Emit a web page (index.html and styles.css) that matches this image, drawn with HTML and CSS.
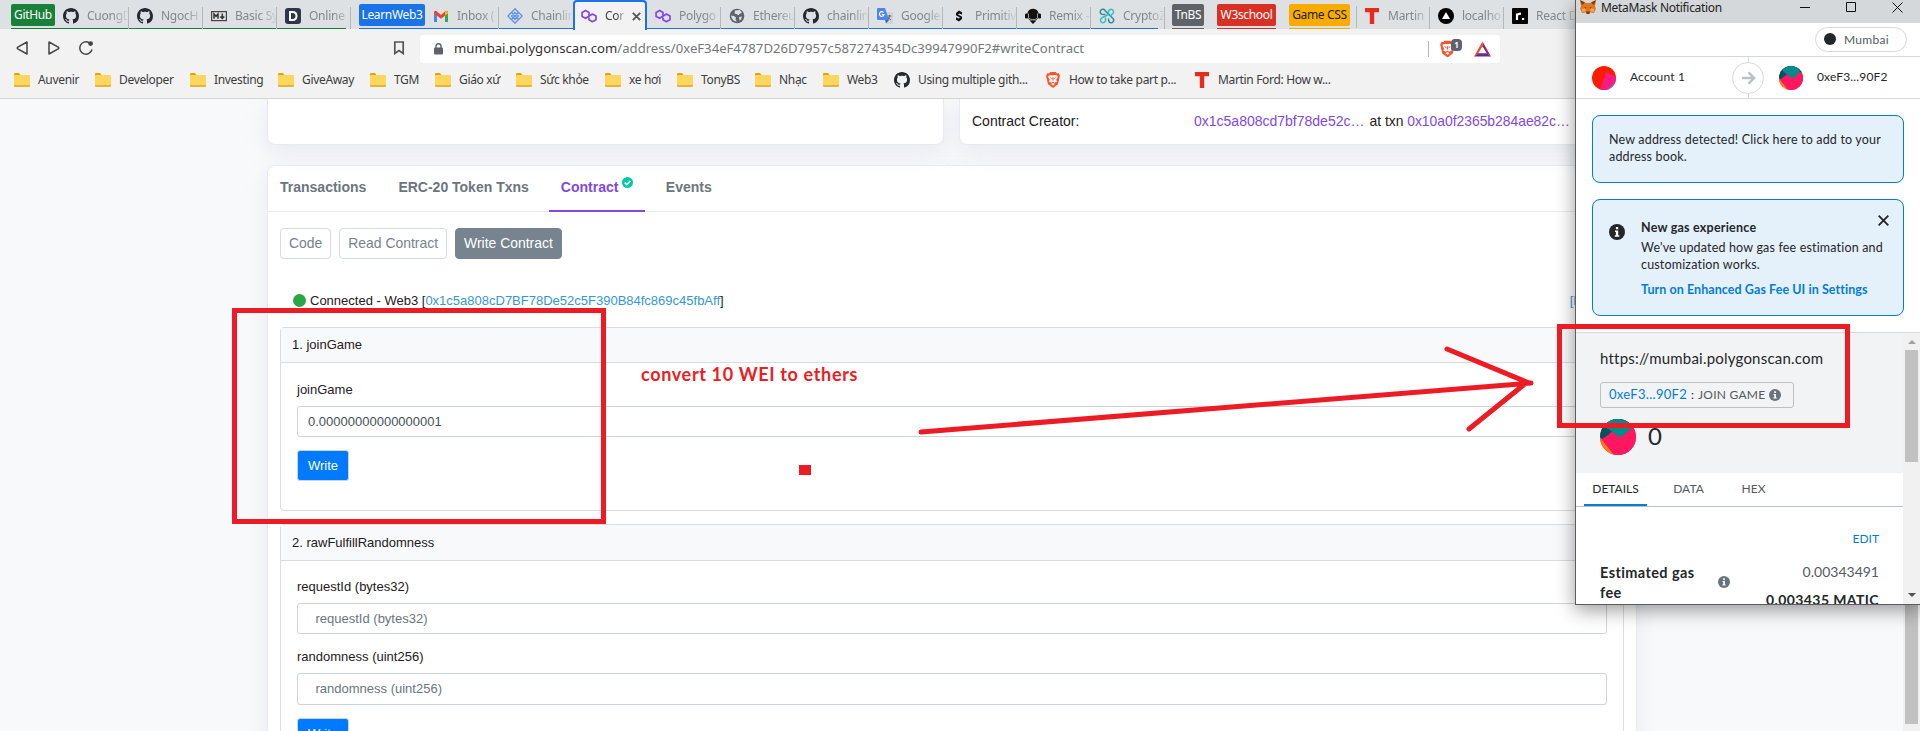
FILE: index.html
```html
<!DOCTYPE html>
<html lang="en">
<head>
<meta charset="utf-8">
<title>Contract Address</title>
<link rel="stylesheet" href="styles.css">
</head>
<body>
<svg class="defs" width="0" height="0">
  <defs>
    <symbol id="github" viewBox="0 0 16 16"><path fill="#24292f" d="M8 0C3.58 0 0 3.58 0 8c0 3.54 2.29 6.53 5.47 7.59.4.07.55-.17.55-.38 0-.19-.01-.82-.01-1.49-2.01.37-2.53-.49-2.69-.94-.09-.23-.48-.94-.82-1.13-.28-.15-.68-.52-.01-.53.63-.01 1.08.58 1.23.82.72 1.21 1.87.87 2.33.66.07-.52.28-.87.51-1.07-1.78-.2-3.64-.89-3.64-3.95 0-.87.31-1.59.82-2.15-.08-.2-.36-1.02.08-2.12 0 0 .67-.21 2.2.82.64-.18 1.32-.27 2-.27s1.36.09 2 .27c1.53-1.04 2.2-.82 2.2-.82.44 1.1.16 1.92.08 2.12.51.56.82 1.27.82 2.15 0 3.07-1.87 3.75-3.65 3.95.29.25.54.73.54 1.48 0 1.07-.01 1.93-.01 2.2 0 .21.15.46.55.38A8.01 8.01 0 0 0 16 8c0-4.42-3.58-8-8-8z"/></symbol>
    <symbol id="polygon" viewBox="0 0 16 16"><g fill="none" stroke="#8247e5" stroke-width="1.7" stroke-linejoin="round"><path d="M8 8.2V4.4L4.6 2.4 1.1 4.4v4L4.6 10.300 11.400 6 15 8v3.700L11.400 13.700 8 11.700V9.500"/></g></symbol>
    <symbol id="folder" viewBox="0 0 16 14"><path fill="#dfa313" d="M0 1.200Q0 0 1.200 0H5l1.500 2H15v3H0z"/><rect x="0" y="2" width="16" height="11.500" rx="1" fill="#ffd65c"/><path fill="#d9a62e" d="M0 12.300h16v.4q0 1-1 1H1q-1 0-1-1z"/></symbol>
    <symbol id="tee" viewBox="0 0 16 16"><path fill="#e62b1e" d="M1 0h14v4.200h-4.800V16H5.800V4.200H1z"/></symbol>
    <symbol id="brave" viewBox="0 0 16 18"><path fill="#fb542b" d="M5 0h6l1.500 1.600 2-.2 1.300 3.200-.6 2.200-1.600 7L8 18l-5.600-4.200-1.600-7-.6-2.200L1.500 1.400l2 .2z"/><path fill="#fff" d="M8 4l2.200-.7 2.800.8.300 1.800-1.700 2.700 1 2L9.800 12 8 10.700 6.200 12l-2.800-1.400 1-2L2.700 5.900 3 4.100l2.800-.8zM8 12.200l2.200 1.200L8 15.200l-2.200-1.800z"/><path fill="#fb542b" d="M4.200 6l2.700.7-.6 1.100zM11.800 6l-2.700.7.6 1.100zM7.300 6h1.400v3.600H7.300z"/></symbol>
    <symbol id="info" viewBox="0 0 16 16"><circle cx="8" cy="8" r="8" fill="currentColor"/><path fill="#fff" d="M6.900 3h2.300v2.200H6.900zM6 6.600h3.200v4.600h1.100v1.500H5.800v-1.500h1.100V8.100H6z"/></symbol>
    <symbol id="jazz" viewBox="0 0 36 36"><clipPath id="disc"><circle cx="18" cy="18" r="18"/></clipPath><g clip-path="url(#disc)"><path fill="#ff1861" d="M0 0h36v36H0z"/><path fill="#035262" d="M0 0h36v9l-2 0H0zM0 0h14v13L0 21z"/><path fill="#028a8d" d="M5 0h26v10L20 19 6 8z"/><path fill="#ff7a0d" d="M0 18l14 18H0z"/><path fill="#ff1861" d="M2 21L12 12.500l8 6.500L33 9h3v27H14z"/></g></symbol>
  </defs>
</svg>

<div class="browser">
  <div class="tabstrip">
    <div class="group green"><span class="chip">GitHub</span>
      <div class="tab"><svg class="fav"><use href="#github"/></svg><span>CuongD</span></div>
      <div class="tab"><svg class="fav"><use href="#github"/></svg><span>NgocH</span></div>
      <div class="tab"><svg class="fav" viewBox="0 0 16 16"><rect x=".6" y="3.600" width="14.800" height="9" fill="none" stroke="#444" stroke-width="1.200"/><path fill="none" stroke="#333" stroke-width="1.500" d="M3 10.800V6l2 2.300L7 6v4.800M11.300 5.500v4.500M9.300 8.500l2 2 2-2"/></svg><span>Basic Sy</span></div>
      <div class="tab"><svg class="fav" viewBox="0 0 16 16"><rect width="16" height="16" rx="3" fill="#2d3748"/><path fill="none" stroke="#fff" stroke-width="2" d="M5 4h2.500q4 0 4 4t-4 4H5z"/></svg><span>Online</span></div>
    </div>
    <div class="group blue"><span class="chip">LearnWeb3</span>
      <div class="tab"><svg class="fav" viewBox="0 0 16 16"><path fill="#4285f4" d="M1 4l3 2v8H1z"/><path fill="#34a853" d="M12 6l3-2v10h-3z"/><path fill="#ea4335" d="M1 4q1-2 3-.5L8 7l4-3.500Q14 2 15 4v1.500l-7 5.200-7-5.200z"/><path fill="#fbbc04" d="M12 3.500Q14.500 2 15 4.200V5.500l-3 2.300z"/></svg><span>Inbox (</span></div>
      <div class="tab"><svg class="fav" viewBox="0 0 16 16"><g fill="none" stroke="#5b8def" stroke-width="1.300"><path d="M8 .8L15.200 8 8 15.200.8 8zM4.500 4.500l7 7M11.500 4.500l-7 7M8 4.500L11.500 8 8 11.500 4.500 8z"/></g></svg><span>Chainlin</span></div>
      <div class="tab active"><svg class="fav"><use href="#polygon"/></svg><span>Cor</span><svg class="close" viewBox="0 0 9 9"><path fill="none" stroke="#555" stroke-width="1.800" d="M.8.800l7.400 7.400M8.200.8L.8 8.200"/></svg></div>
      <div class="tab"><svg class="fav"><use href="#polygon"/></svg><span>Polygo</span></div>
      <div class="tab"><svg class="fav" viewBox="0 0 16 16"><circle cx="8" cy="8" r="7.300" fill="#5f6368"/><path fill="#dee1e3" d="M2 7.500l3 .5 2 1.500-.5 2L8 13.500q-5 0-6-6zM6 2.500l5-.5 2 3-2 .5-1.500 1.800L7.500 6l-2-.5z"/><path fill="#dee1e3" d="M10 9l3-.5-1 3-1.500 1z"/></svg><span>Ethereu</span></div>
      <div class="tab"><svg class="fav"><use href="#github"/></svg><span>chainlin</span></div>
      <div class="tab"><svg class="fav" viewBox="0 0 16 16"><path fill="#cfd3d8" d="M7 4h8q1 0 1 1v10q0 1-1 1h-5z"/><path fill="#4a86ee" d="M1 0h7l4 12H1q-1 0-1-1V1q0-1 1-1z"/><path fill="#3367c5" d="M8 12h4l-3 3.500z"/><path fill="none" stroke="#fff" stroke-width="1.200" d="M6.500 4.500A2.300 2.300 0 1 0 7 6.500H4.800"/><path fill="none" stroke="#667" d="M10.500 8h4M12.500 7v1q0 2-2 4M11 9.500l3 2.500"/></svg><span>Google</span></div>
      <div class="tab"><svg class="fav" viewBox="0 0 16 16"><path fill="#111" d="M5 5l3-2.500 3 1.700v2.600L8.500 5.400 5 7.500zM11 11l-3 2.500-3-1.700V9.200l2.500 1.400L11 8.500z"/><path stroke="#111" stroke-width="2" d="M5.500 6.500l5 3"/></svg><span>Primitiv</span></div>
      <div class="tab"><svg class="fav" viewBox="0 0 16 16"><path fill="#111" d="M8 0.800a6 6 0 0 1 5 9.200q-1 2.500-5 2.500T3 10A6 6 0 0 1 8 .8z"/><rect x="0" y="5.500" width="3" height="5" rx="1.300" fill="#111"/><rect x="13" y="5.500" width="3" height="5" rx="1.300" fill="#111"/><path fill="none" stroke="#dee1e3" stroke-width=".7" d="M3.500 5.500v4.200q1 2 4.500 2t4.500-2V5.500"/><path fill="#111" d="M4.500 12.500L8 16l3.500-3.500z"/></svg><span>Remix -</span></div>
      <div class="tab"><svg class="fav" viewBox="0 0 16 16"><g fill="none" stroke-width="1.500"><path stroke="#2a8d9c" d="M6.500 6.500L2.700 6.200A2.600 2.600 0 1 1 6.200 2.700L13.300 9.800A2.600 2.600 0 1 1 9.800 13.300L9.500 10.500"/><path stroke="#38bcc8" d="M9.500 6.500V3A2.600 2.600 0 1 1 13 6.300L11 8.500M6.500 9.500V13A2.600 2.600 0 1 1 3 9.700L9.500 6.500"/></g></svg><span>CryptoZ</span></div>
    </div>
    <div class="group grey"><span class="chip">TnBS</span></div>
    <div class="group red"><span class="chip">W3school</span></div>
    <div class="group amber"><span class="chip">Game CSS</span></div>
    <div class="group plain">
      <div class="tab"><svg class="fav"><use href="#tee"/></svg><span>Martin</span></div>
      <div class="tab"><svg class="fav" viewBox="0 0 16 16"><circle cx="8" cy="8" r="8" fill="#000"/><path fill="#fff" d="M8 4l4 7H4z"/></svg><span>localho</span></div>
      <div class="tab"><svg class="fav" viewBox="0 0 16 16"><rect width="16" height="16" rx="1" fill="#000"/><path fill="none" stroke="#fff" stroke-width="2.200" d="M5 12V5.500M5 8q0-2.400 4-2.400"/><path fill="#fff" d="M10 10h2.200v2H10z"/></svg><span>React D</span></div>
    </div>
  </div>

  <div class="toolbar">
    <svg class="nav" viewBox="0 0 16 16"><path fill="none" stroke="#444" stroke-width="1.500" stroke-linejoin="round" d="M13 2v12L3.800 8.800q-1.200-.8 0-1.600z"/></svg>
    <svg class="nav" viewBox="0 0 16 16"><path fill="none" stroke="#444" stroke-width="1.500" stroke-linejoin="round" d="M3 2v12l9.200-5.200q1.200-.8 0-1.600z"/></svg>
    <svg class="nav" viewBox="0 0 16 16"><path fill="none" stroke="#444" stroke-width="1.500" d="M14 9.500A6.200 6.200 0 1 1 11 2.600"/><circle cx="12.600" cy="3.600" r="2.400" fill="#444"/></svg>
    <svg class="bookmark" viewBox="0 0 12 14"><path fill="none" stroke="#555" stroke-width="1.700" d="M1.800 1h8.400v11.500L6 9.500l-4.200 3z"/></svg>
    <div class="omnibox">
      <svg class="lock" viewBox="0 0 9 12"><rect y="4.500" width="9" height="7" rx="1" fill="#5f6368"/><path fill="none" stroke="#5f6368" stroke-width="1.400" d="M2 5V3a2.500 2.300 0 0 1 5 0v2"/></svg>
      <span class="url">mumbai.polygonscan.com<i>/address/0xeF34eF4787D26D7957c587274354Dc39947990F2#writeContract</i></span>
      <span class="divider"></span>
      <span class="shield"><svg viewBox="0 0 16 18"><use href="#brave"/></svg><b>1</b></span>
      <svg class="bat" viewBox="0 0 18 16"><path fill="#ff4724" d="M9 0v5L4.500 12.500 0 16z"/><path fill="#9e1f63" d="M9 0l9 16-4.500-3.500L9 5z"/><path fill="#662d91" d="M0 16l4.500-3.500h9L18 16z"/></svg>
    </div>
  </div>

  <div class="bookmarks">
    <span class="bm w81"><svg class="dir"><use href="#folder"/></svg>Auvenir</span>
    <span class="bm w95"><svg class="dir"><use href="#folder"/></svg>Developer</span>
    <span class="bm w88"><svg class="dir"><use href="#folder"/></svg>Investing</span>
    <span class="bm w92"><svg class="dir"><use href="#folder"/></svg>GiveAway</span>
    <span class="bm w65"><svg class="dir"><use href="#folder"/></svg>TGM</span>
    <span class="bm w81b"><svg class="dir"><use href="#folder"/></svg>Giáo xứ</span>
    <span class="bm w89"><svg class="dir"><use href="#folder"/></svg>Sức khỏe</span>
    <span class="bm w72"><svg class="dir"><use href="#folder"/></svg>xe hơi</span>
    <span class="bm w78"><svg class="dir"><use href="#folder"/></svg>TonyBS</span>
    <span class="bm w68"><svg class="dir"><use href="#folder"/></svg>Nhạc</span>
    <span class="bm w71"><svg class="dir"><use href="#folder"/></svg>Web3</span>
    <span class="bm w151"><svg class="site"><use href="#github"/></svg>Using multiple gith...</span>
    <span class="bm w149"><svg class="site"><use href="#brave"/></svg>How to take part p...</span>
    <span class="bm"><svg class="site"><use href="#tee"/></svg>Martin Ford: How w...</span>
  </div>

  <div class="viewport">
    <main class="page">
      <div class="summary">
        <section class="panel overview"></section>
        <section class="panel more"><span class="k">Contract Creator:</span><a>0x1c5a808cd7bf78de52c…</a><span class="txn">at txn <a>0x10a0f2365b284ae82c…</a></span></section>
      </div>
      <section class="panel contract">
        <nav class="sections">
          <span class="sec">Transactions</span>
          <span class="sec">ERC-20 Token Txns</span>
          <span class="sec on">Contract<svg class="check" viewBox="0 0 11 11"><circle cx="5.500" cy="5.500" r="5.500" fill="#00c9a7"/><path fill="none" stroke="#fff" stroke-width="1.500" d="M2.700 5.600l2 2 3.700-3.700"/></svg></span>
          <span class="sec">Events</span>
        </nav>
        <div class="modes"><span class="mode">Code</span><span class="mode">Read Contract</span><span class="mode sel">Write Contract</span></div>
        <div class="status"><i class="dot"></i><span>Connected - Web3 [<a>0x1c5a808cD7BF78De52c5F390B84fc869c45fbAff</a>]</span><span class="expand">[<a>Expand all</a>]</span></div>
        <article class="fn first">
          <header>1. joinGame</header>
          <div class="form">
            <label>joinGame</label>
            <div class="field value">0.00000000000000001</div>
            <span class="write">Write</span>
          </div>
        </article>
        <article class="fn second">
          <header>2. rawFulfillRandomness</header>
          <div class="form">
            <label>requestId (bytes32)</label>
            <div class="field">requestId (bytes32)</div>
            <label>randomness (uint256)</label>
            <div class="field tall">randomness (uint256)</div>
            <span class="write">Write</span>
          </div>
        </article>
      </section>
    </main>
    <div class="scroll"><div class="thumb"></div></div>
  </div>
</div>

<aside class="wallet">
  <div class="titlebar">
    <svg class="fox" viewBox="0 0 16 14"><path fill="#e2761b" d="M0 0l6 3h4l6-3-1 6 .8 3-1.800 4-4-.8L8 14l-2-1.800L2 13 .2 9 1 6z"/><path fill="#763d16" d="M0 0l5 2.500L2 5zM16 0l-5 2.500L14 5zM6 11.500h4L9.500 14h-3z"/><path fill="#f6a45c" d="M2 9l3-1 1 3-4 1zM14 9l-3-1-1 3 4 1z"/><path fill="#233447" d="M4.500 7l2 1-1.500.6zM11.500 7l-2 1 1.500.6z"/></svg>
    <span class="wtitle">MetaMask Notification</span>
    <svg class="ctl" viewBox="0 0 104 12"><path fill="none" stroke="#111" d="M0 6.500h10M46.500 1.500h9v9h-9zM92.500 1.500l10 10M102.500 1.500l-10 10"/></svg>
  </div>
  <div class="network"><span class="pill"><i></i>Mumbai</span></div>
  <div class="parties">
    <svg class="av" viewBox="0 0 24 24"><clipPath id="d2"><circle cx="12" cy="12" r="12"/></clipPath><g clip-path="url(#d2)"><path fill="#fc1c04" d="M0 0h24v24H0z"/><path fill="#ff1880" d="M14 6l10 5v13H8z"/><path fill="#1aa6f2" d="M24 16v8h-9z"/></g></svg>
    <span class="from">Account 1</span>
    <span class="hop"><svg viewBox="0 0 16 14"><path fill="none" stroke="#bbc0c5" stroke-width="2.600" d="M1 7h12.500M8 1l6 6-6 6"/></svg></span>
    <svg class="av"><use href="#jazz"/></svg>
    <span class="to">0xeF3...90F2</span>
  </div>
  <div class="notices">
    <div class="notice addr">New address detected! Click here to add to your<br>address book.</div>
    <div class="notice gas">
      <svg class="inf"><use href="#info"/></svg>
      <div class="msg"><b>New gas experience</b><p>We've updated how gas fee estimation and<br>customization works.</p><a>Turn on Enhanced Gas Fee UI in Settings</a></div>
      <svg class="x" viewBox="0 0 11 11"><path fill="none" stroke="#24272a" stroke-width="1.900" d="M.7.700l9.600 9.600M10.300.7L.7 10.300"/></svg>
    </div>
  </div>
  <div class="detail">
    <div class="body">
      <div class="origin">
        <div class="host">https://mumbai.polygonscan.com</div>
        <div class="tag"><a>0xeF3...90F2</a><span class="colon">:</span><span class="act">JOIN GAME</span><svg class="mini"><use href="#info"/></svg></div>
        <div class="amount"><svg class="big"><use href="#jazz"/></svg><span>0</span></div>
      </div>
      <div class="wtabs"><span class="cur">DETAILS</span><span>DATA</span><span class="hex">HEX</span></div>
      <div class="edit">EDIT</div>
      <div class="fee">
        <div class="feename">Estimated gas<br>fee</div>
        <svg class="mini"><use href="#info"/></svg>
        <div class="sums"><span>0.00343491</span><b>0.003435 MATIC</b></div>
      </div>
    </div>
    <div class="wscroll"><i class="up"></i><div class="wthumb"></div><i class="down"></i></div>
  </div>
</aside>

<div class="mark box-form"></div>
<div class="mark box-wallet"></div>
<div class="mark-dot"></div>
<div class="mark-note">convert 10 WEI to ethers</div>
<svg class="mark-arrow" viewBox="0 0 630 100"><path fill="none" stroke="#ed1c24" stroke-width="5" stroke-linecap="round" d="M11 92L621 43M537 9L619 43M616 43L559 89"/></svg>
</body>
</html>
```
FILE: styles.css
```css
* { box-sizing: border-box; }
body { margin: 0; width: 1920px; height: 731px; overflow: hidden; position: relative; font-family: "Liberation Sans", Arial, sans-serif; color: #1e2022; background: #f8f9fb; }
a { text-decoration: none; }
svg { display: block; flex: none; }
.defs { position: absolute; }
.browser { display: flex; flex-direction: column; height: 731px; }

/* Tab strip */
.tabstrip { display: flex; height: 29px; flex: none; background: #dee1e3; padding-left: 11px; font: 12px/24px "Noto Sans", "Open Sans", sans-serif; }
.group { display: flex; height: 29px; align-items: stretch; border-bottom: 1px solid; flex: none; }
.chip { height: 22px; margin-top: 4px; border-radius: 2px; color: #fff; line-height: 21px; text-align: center; flex: none; letter-spacing: -.35px; white-space: nowrap; }
.green { color: #188038; width: 335px; }
.green .chip { background: #188038; width: 44px; }
.blue { color: #1a73e8; width: 799px; margin-left: 13px; }
.blue .chip { background: #1a73e8; width: 66px; }
.grey { color: #5f6368; margin-left: 14px; }
.grey .chip { background: #5f6368; width: 32px; }
.red { color: #d93025; margin-left: 13px; }
.red .chip { background: #d93025; width: 59px; }
.amber { color: #f9ab00; margin-left: 13px; }
.amber .chip { background: #f9ab00; color: #222; width: 61px; }
.plain { border-color: transparent; margin-left: 6px; }
.plain .tab:first-child { border-left: 1px solid transparent; border-image: linear-gradient(transparent 7px, #b4b7ba 7px) 1; padding-left: 7px; }
.tab { width: 74px; flex: none; display: flex; align-items: center; gap: 8px; padding: 3px 0 0 8px; color: #84878a; position: relative; letter-spacing: -.25px; }
.tab::after { content: ""; width: 1px; height: 22px; background: #b4b7ba; position: absolute; right: 0; top: 7px; }
.tab span { width: 41px; overflow: hidden; white-space: nowrap; -webkit-mask-image: linear-gradient(90deg, #000 60%, transparent 105%); mask-image: linear-gradient(90deg, #000 60%, transparent 105%); }
.fav { width: 16px; height: 16px; }
.tab.active { background: #f2f2f2; border: 2px solid #1a73e8; border-bottom: 0; border-radius: 4px 4px 0 0; height: 30px; padding: 0 0 0 6px; color: #444; }
.tab.active span { width: 20px; }
.tab.active .close { margin-left: -1px; }
.tab.active::after, .tab:has(+ .active)::after { display: none; }
.close { width: 9px; height: 9px; }

/* Toolbar */
.toolbar { height: 37px; flex: none; background: #f2f2f2; display: flex; align-items: center; padding: 1px 0 0 14px; gap: 16px; }
.nav { width: 16px; height: 16px; }
.bookmark { width: 12px; height: 14px; margin: 0 -1px 0 283px; }
.omnibox { width: 1080px; height: 28px; margin-top: 1px; background: #fff; border-radius: 4px; display: flex; align-items: center; padding-left: 14px; font: 13.130px/28px "Noto Sans", "Open Sans", sans-serif; color: #333; }
.lock { width: 9px; height: 12px; }
.url { margin-left: 11px; width: 974px; white-space: nowrap; padding-bottom: 1px; }
.url i { font-style: normal; color: #74777a; }
.divider { width: 1px; height: 16px; background: #b4b7ba; margin-right: 11px; }
.shield { position: relative; width: 34px; }
.shield svg { width: 15px; height: 18px; }
.shield b { position: absolute; left: 11px; top: -1px; width: 11px; height: 12px; border-radius: 4px; background: #5d6270; color: #fff; font: bold 8px/12px "Noto Sans", sans-serif; text-align: center; }
.bat { width: 17px; height: 16px; }

/* Bookmarks bar */
.bookmarks { height: 33px; flex: none; background: #f2f2f2; border-bottom: 1px solid #d2d4d6; display: flex; align-items: center; padding: 0 0 4px 14px; font: 12px/16px "Noto Sans", "Open Sans", sans-serif; letter-spacing: -.33px; color: #3c3c3c; }
.bm { display: flex; align-items: center; gap: 8px; flex: none; white-space: nowrap; }
.dir { width: 16px; height: 14px; }
.site { width: 16px; height: 16px; }
.w81 { width: 81px; } .w95 { width: 95px; } .w88 { width: 88px; } .w92 { width: 92px; }
.w65 { width: 65px; } .w81b { width: 81px; } .w89 { width: 89px; } .w72 { width: 72px; }
.w78 { width: 78px; } .w68 { width: 68px; } .w71 { width: 71px; } .w151 { width: 151px; } .w149 { width: 149px; }

/* Explorer page */
.viewport { flex: 1; min-height: 0; display: flex; overflow: hidden; background: #f8f9fb; }
.page { width: 1903px; padding-left: 267px; }
.scroll { width: 17px; background: #f1f1f1; padding: 0 2px; flex: none; }
.thumb { height: 625px; background: #c1c1c1; }
.summary { display: flex; gap: 15px; }
.panel { background: #fff; border: 1px solid #e7eaf3; box-shadow: 0 8px 20px rgba(189, 197, 209, .28); }
.overview, .more { height: 46px; border-top: 0; border-radius: 0 0 8px 8px; }
.overview { width: 677px; }
.more { width: 678px; display: flex; align-items: center; padding: 0 0 1px 12px; font-size: 14px; white-space: nowrap; }
.more .k { width: 222px; }
.more a { color: #8247e5; }
.txn { margin-left: 5px; font-size: 13.870px; }
.contract { width: 1370px; height: 700px; margin-top: 20px; border-radius: 8px 8px 0 0; }
.sections { height: 46px; display: flex; border-bottom: 1px solid #e7eaf3; font-size: 14px; font-weight: bold; color: #6c757e; line-height: 43px; }
.sec { padding: 0 12px 0 12px; margin-right: 8px; }
.sec.on { color: #8247e5; border-bottom: 2px solid #8247e5; display: flex; width: 96px; height: 46px; margin-right: 9px; }
.check { width: 11px; height: 11px; margin: 11px 0 0 4px; }
.modes { display: flex; gap: 8px; padding: 16px 0 0 12px; font-size: 13.930px; color: #77838f; }
.mode { height: 31px; line-height: 29px; border: 1px solid #d5dae2; border-radius: 4px; padding: 0 8px; }
.mode.sel { background: #77838f; border-color: #77838f; color: #fff; }
.status { display: flex; align-items: center; font-size: 13px; height: 20px; margin-top: 31px; padding-left: 25px; white-space: nowrap; }
.status > * { flex: none; }
.status a { color: #3498db; }
.dot { width: 13px; height: 13px; border-radius: 50%; background: #28a745; margin-right: 4px; }
.expand { color: #3498db; margin-left: 846px; }
.fn { width: 1344px; margin-left: 12px; border: 1px solid #dadde0; border-radius: 4px; font-size: 13px; }
.fn header { height: 35px; line-height: 33px; padding-left: 11px; background: #f8f9fb; border-bottom: 1px solid #dadde0; }
.first { margin-top: 17px; height: 184px; }
.second { margin-top: 13px; height: 300px; }
.second header { height: 36px; line-height: 35px; }
.form { padding: 16px 16px 0 16px; display: flex; flex-direction: column; }
.second .form { padding-top: 15px; }
.form label { height: 27px; line-height: 21px; }
.field { height: 31px; border: 1px solid #ced4da; border-radius: 3px; line-height: 29px; padding-left: 17.500px; color: #6c757d; margin-bottom: 12px; }
.field.value { padding-left: 10px; color: #495057; }
.field.tall { height: 32px; }
.write { width: 52px; height: 31px; background: #007bff; color: #fff; border: 1px solid #ced4da; border-radius: 3px; line-height: 29px; text-align: center; margin-top: 1px; }

/* Wallet popup window */
.wallet { position: absolute; left: 1575px; top: 0; width: 346px; height: 605px; background: #fff; border: 1px solid #5c5c5c; border-top: 0; box-shadow: 0 5px 18px rgba(0, 0, 0, .4); font: 12px/17px Lato, "Open Sans", sans-serif; color: #24272a; display: flex; flex-direction: column; overflow: hidden; }
.titlebar { height: 23px; flex: none; background: #d4d8da; display: flex; padding-left: 4px; font: 12px/15px "Noto Sans", "Open Sans", sans-serif; letter-spacing: -.3px; color: #222; }
.fox { width: 16px; height: 14px; }
.wtitle { width: 199px; margin-left: 5px; }
.ctl { width: 104px; height: 12px; margin-top: 1px; }
.network { height: 34px; flex: none; border-bottom: 1px solid #d6d9dc; display: flex; justify-content: flex-end; padding: 4px 13px 0 0; }
.pill { width: 92px; height: 25px; border: 1px solid #d6d9dc; border-radius: 13px; display: flex; align-items: center; color: #535a61; padding: 0 0 1px 8px; letter-spacing: .3px; }
.pill i { width: 12px; height: 12px; border-radius: 50%; background: #24272a; margin-right: 8px; }
.parties { height: 42px; flex: none; border-bottom: 1px solid #d6d9dc; display: flex; align-items: center; padding-left: 16px; background: linear-gradient(#d6d9dc, #d6d9dc) 172px 0 / 1px 100% no-repeat; }
.av { width: 24px; height: 24px; }
.from, .to { margin-left: 14px; padding-bottom: 2px; letter-spacing: .15px; }
.from { width: 102px; }
.hop { width: 32px; height: 32px; border: 1px solid #d6d9dc; border-radius: 50%; background: #fff; display: flex; align-items: center; justify-content: center; margin-right: 15px; }
.hop svg { width: 15px; height: 14px; }
.notices { height: 233px; flex: none; padding: 16px; display: flex; flex-direction: column; gap: 16px; font-size: 12.500px; letter-spacing: .17px; }
.notice { border: 1px solid #037dd6; border-radius: 8px; background: #e4f0fa; width: 312px; padding-left: 16px; }
.addr { height: 68px; padding-top: 15px; }
.gas { height: 117px; display: flex; padding-top: 19px; }
.inf { width: 16px; height: 16px; margin-top: 5px; color: #24272a; }
.msg { margin-left: 16px; width: 237px; white-space: nowrap; }
.msg b { display: block; letter-spacing: .22px; }
.msg p { margin: 3px 0 8px; }
.msg a { color: #037dd6; font-weight: bold; letter-spacing: .07px; }
.x { width: 11px; height: 11px; margin-top: -4px; }
.detail { flex: 1; min-height: 0; border-top: 1px solid #d6d9dc; display: flex; }
.body { width: 327px; }
.origin { height: 140px; background: #f2f3f4; padding: 15px 0 0 24px; }
.host { font-size: 15px; line-height: 20px; height: 34px; letter-spacing: .21px; }
.tag { width: 194px; height: 26px; border: 1px solid #bbc0c5; border-radius: 3px; display: flex; align-items: center; padding: 0 0 1px 8px; }
.tag a { color: #037dd6; width: 78px; font-size: 13px; letter-spacing: .3px; }
.colon { margin: 0 4px; }
.act { color: #535a61; width: 67px; white-space: nowrap; letter-spacing: .25px; }
.mini { width: 12px; height: 12px; color: #6a737d; margin-left: 4px; }
.amount { display: flex; align-items: center; margin-top: 11px; font-size: 24px; height: 36px; }
.amount span { padding-bottom: 3px; }
.big { width: 36px; height: 36px; margin-right: 12px; }
.wtabs { height: 34px; border-bottom: 1px solid #bbc0c5; display: flex; padding-left: 8px; line-height: 32px; color: #535a61; }
.wtabs span { padding: 0 8px; width: 63px; text-align: center; }
.wtabs .cur { color: #24272a; border-bottom: 2px solid #037dd6; }
.wtabs span + span { margin-left: 10px; }
.wtabs span + .hex { margin-left: 2px; }
.edit { text-align: right; color: #037dd6; padding: 23px 24px 0 0; }
.fee { display: flex; padding: 16px 24px 0 24px; }
.feename { font-size: 14.500px; font-weight: bold; line-height: 20px; width: 114px; letter-spacing: .4px; }
.fee .mini { margin: 13px 0 0 4px; }
.sums { flex: 1; display: flex; flex-direction: column; align-items: flex-end; font-size: 14px; line-height: 17px; color: #535a61; white-space: nowrap; }
.sums b { margin-top: 11px; color: #24272a; letter-spacing: .4px; }
.wscroll { width: 17px; background: #f1f1f1; display: flex; flex-direction: column; align-items: center; }
.wthumb { width: 13px; height: 112px; background: #c1c1c1; }
.up, .down { border: 4px solid transparent; width: 8px; height: 8px; }
.up { border-bottom-color: #a0a0a0; border-top: 0; height: 4px; margin: 7px 0 6px; }
.down { border-top-color: #505050; border-bottom: 0; height: 4px; margin-top: 131px; }

/* Hand-drawn annotations laid over both windows */
.mark { position: absolute; border: 5px solid #ed1c24; }
.box-form { left: 232px; top: 308px; width: 374px; height: 216px; }
.box-wallet { left: 1557px; top: 324px; width: 293px; height: 104px; }
.mark-dot { position: absolute; left: 799px; top: 465px; width: 12px; height: 10px; background: #ed1c24; }
.mark-note { position: absolute; left: 641px; top: 362px; font: bold 18px/24px Lato, "Open Sans", sans-serif; letter-spacing: .65px; color: #ed1c24; white-space: nowrap; }
.mark-arrow { position: absolute; left: 910px; top: 340px; width: 630px; height: 100px; }
```
